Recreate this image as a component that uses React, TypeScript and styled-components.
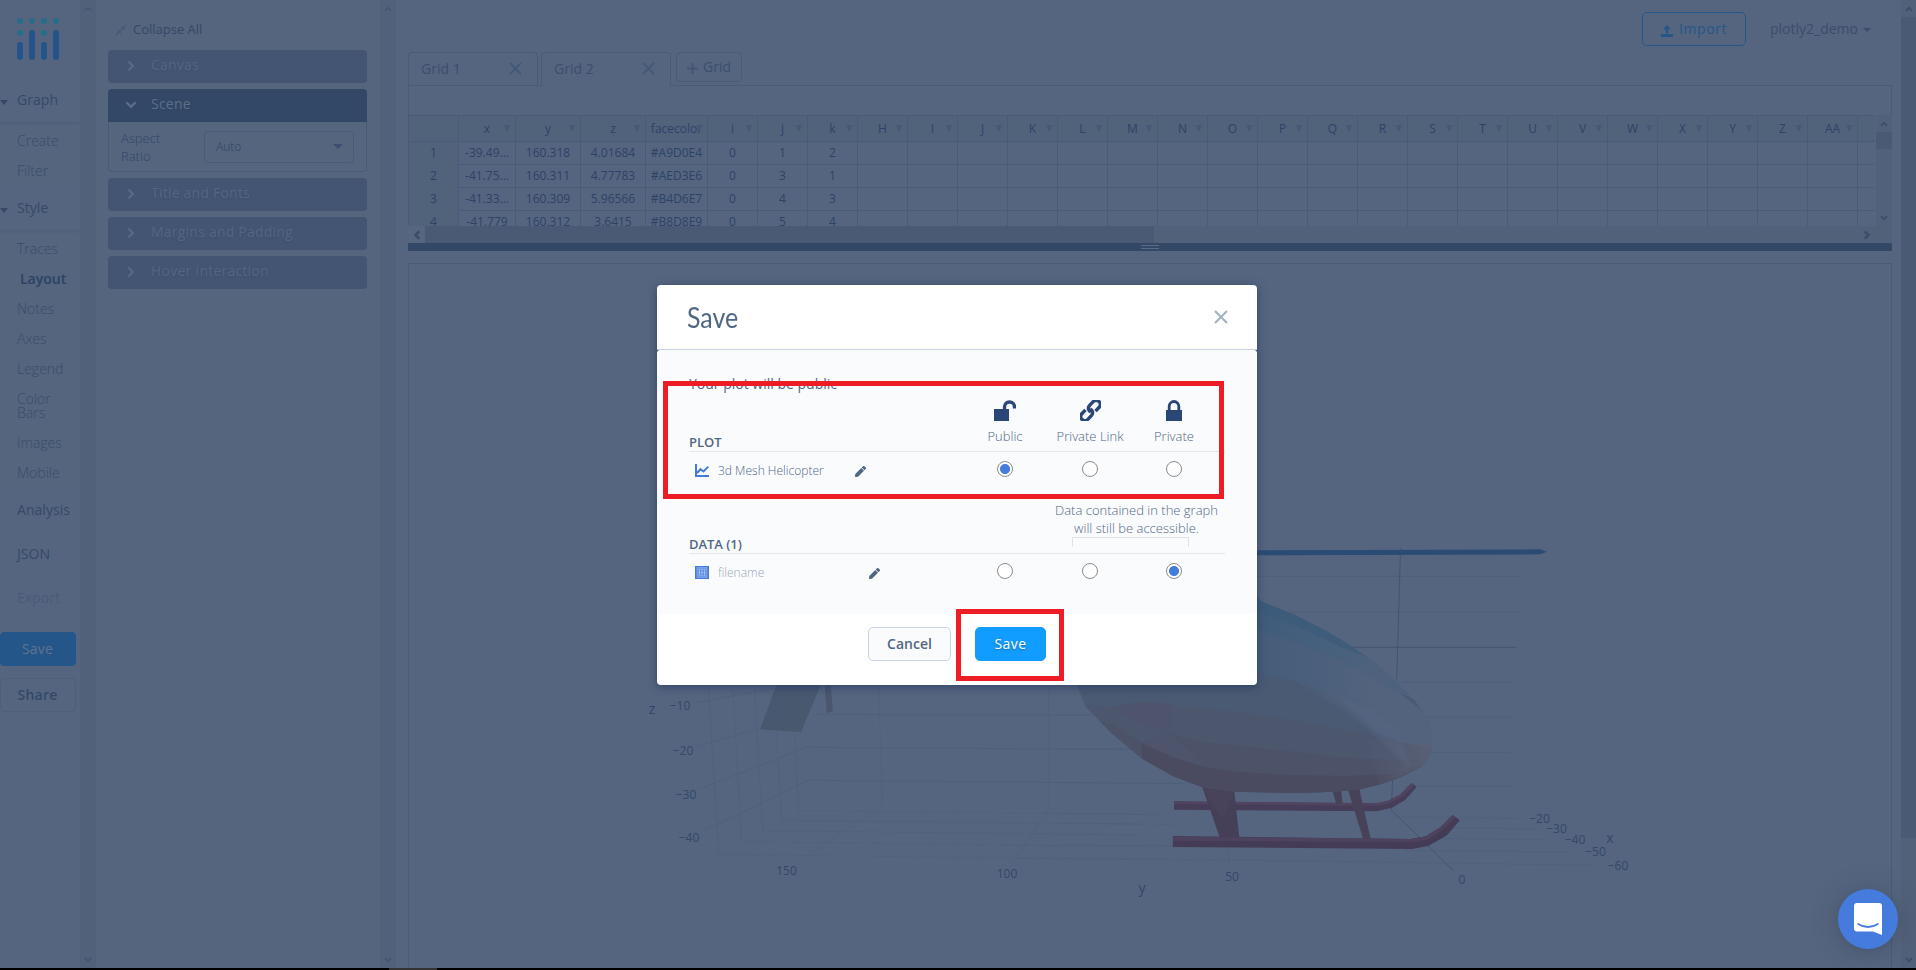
import React from "react";
import styled, { createGlobalStyle } from "styled-components";
import { FaPen, FaCompressAlt } from "react-icons/fa";

const sans = `"Open Sans", "Noto Sans", sans-serif`;
const c = {
  page: "#55657f",
  panel: "#54657d",
  track: "#52617a",
  thumb: "#4b5a74",
  line: "#4a5b78",
  text: "#3a4d6c",
  dark: "#324866",
  box: "#435573",
  blue: "#25568a",
  accent: "#447bdc",
};

const Global = createGlobalStyle`
  * { box-sizing: border-box; }
  html, body { margin: 0; padding: 0; }
  body { font-family: ${sans}; background: ${c.page}; overflow: hidden; }
  button { font-family: inherit; }
`;

const Page = styled.div`
  width: 1916px;
  height: 970px;
  display: flex;
  flex-direction: column;
  position: relative;
  overflow: hidden;
  color: ${c.text};
`;
const Workspace = styled.div`
  display: flex;
  height: 968px;
  background: ${c.page};
`;
const TaskEdge = styled.div`
  height: 2px;
  background: #000;
  padding-left: 389px;
`;
const TaskItem = styled.div`
  width: 48px;
  height: 2px;
  background: #333;
`;

const Nav = styled.nav`
  width: 80px;
  flex: none;
`;
const LogoWrap = styled.div`
  height: 78px;
  padding: 18px 0 0 17px;
`;
const NavHeader = styled.div<{ $faded?: boolean }>`
  height: 44px;
  display: flex;
  align-items: center;
  font-size: 14px;
  padding: 0 0 2px 17px;
  letter-spacing: 0.05px;
  position: relative;
  color: ${(p) => (p.$faded ? "#495b79" : "#344968")};
`;
const NavCaret = styled.span`
  position: absolute;
  left: 0;
  top: 22px;
  border: 4.5px solid transparent;
  border-top: 5px solid #344968;
  border-bottom: 0;
`;
const NavGroup = styled.div`
  width: 79px;
  padding-top: 4px;
  background: linear-gradient(#4e5f79 0, #54657d 4px);
`;
const NavItem = styled.div<{ $active?: boolean }>`
  padding: 8px 12px 8px ${(p) => (p.$active ? 20 : 17)}px;
  font-size: 14px;
  line-height: 14px;
  font-weight: ${(p) => (p.$active ? 600 : 300)};
  color: ${(p) => (p.$active ? "#2c4166" : "#384c6b")};
`;
const NavButton = styled.button<{ $primary?: boolean }>`
  display: block;
  width: 76px;
  height: 34px;
  margin-top: 12px;
  padding: 0 1px 2px 0;
  border-radius: 4px;
  border: 1px solid ${(p) => (p.$primary ? c.blue : "#4d5f7b")};
  background: ${(p) => (p.$primary ? c.blue : "transparent")};
  color: ${(p) => (p.$primary ? "#5f7390" : "#344968")};
  font-size: 14px;
  font-weight: ${(p) => (p.$primary ? 500 : 600)};
  letter-spacing: 0.2px;
`;

const ScrollTrack = styled.div<{ $w?: number }>`
  width: ${(p) => p.$w ?? 16}px;
  flex: none;
  background: ${c.track};
  display: flex;
  flex-direction: column;
  align-items: center;
  justify-content: space-between;
`;
const ScrollEnd = styled.div`
  height: 17px;
  width: 100%;
  display: flex;
  align-items: center;
  justify-content: center;
`;
const ScrollThumb = styled.div<{ $h: number }>`
  width: 100%;
  height: ${(p) => p.$h}px;
  background: ${c.thumb};
`;
const Spacer = styled.div`
  flex: 1;
`;

const Panel = styled.section`
  width: 284px;
  flex: none;
  background: ${c.panel};
  padding: 0 13px 0 12px;
`;
const CollapseAll = styled.div`
  height: 50px;
  padding: 8px 0 0 7px;
  display: flex;
  align-items: center;
  gap: 6px;
  font-size: 13px;
  color: #344868;
  svg { color: #475a76; position: relative; top: 1px; }
`;
const Fold = styled.div`
  margin-bottom: 6px;
`;
const FoldHead = styled.div<{ $open?: boolean }>`
  height: 33px;
  border-radius: ${(p) => (p.$open ? "4px 4px 0 0" : "4px")};
  background: ${(p) => (p.$open ? c.dark : c.box)};
  color: ${(p) => (p.$open ? "#5e6f8a" : "#546582")};
  display: flex;
  align-items: center;
  padding: 0 0 5px 17px;
  font-size: 14px;
  letter-spacing: 0.22px;
  text-shadow: 0 1px 2px rgba(42, 63, 95, 0.22);
  svg { position: relative; top: 2px; }
`;
const FoldIcon = styled.span`
  width: 26px;
  display: flex;
`;
const FoldBody = styled.div`
  height: 50px;
  border: 1px solid ${c.line};
  border-top: 0;
  border-radius: 0 0 4px 4px;
  display: flex;
  align-items: center;
  padding: 0 12px;
`;
const FieldLabel = styled.div`
  width: 83px;
  padding: 0 36px 0 0;
  font-size: 13px;
  line-height: 18px;
  font-weight: 300;
  color: #31456a;
`;
const Select = styled.div`
  width: 150px;
  height: 32px;
  border: 1px solid ${c.line};
  border-radius: 4px;
  display: flex;
  align-items: center;
  justify-content: space-between;
  padding: 0 10px 0 11px;
  font-size: 12px;
  font-weight: 300;
  color: #2f4468;
`;
const Caret = styled.span<{ $s: number; $c?: string }>`
  width: 0;
  height: 0;
  border: ${(p) => p.$s}px solid transparent;
  border-top-color: ${(p) => p.$c ?? c.text};
  border-bottom: 0;
`;

const Main = styled.main`
  width: 1505px;
  flex: none;
  padding: 0 9px 0 12px;
  display: flex;
  flex-direction: column;
`;
const TopBar = styled.header`
  height: 52px;
  padding: 12px 21px 0 0;
  display: flex;
  justify-content: flex-end;
`;
const ImportButton = styled.button`
  width: 104px;
  height: 34px;
  border: 1px solid ${c.blue};
  border-radius: 5px;
  background: transparent;
  color: ${c.blue};
  font-size: 14px;
  letter-spacing: 0.6px;
  padding: 0 0 1px;
  display: flex;
  align-items: center;
  justify-content: center;
  gap: 6px;
  svg { position: relative; top: 2px; }
`;
const User = styled.div`
  height: 34px;
  margin-left: 24px;
  display: flex;
  align-items: center;
  font-size: 14px;
  gap: 5px;
  padding-bottom: 2px;
  span:last-child { position: relative; top: 2px; }
`;

const Tabs = styled.div`
  height: 33px;
  display: flex;
  gap: 3px;
`;
const Tab = styled.div<{ $active?: boolean }>`
  width: 130px;
  height: ${(p) => (p.$active ? 34 : 33)}px;
  border: 1px solid ${c.line};
  border-bottom: 0;
  border-radius: 4px 4px 0 0;
  background: ${c.page};
  position: relative;
  display: flex;
  align-items: center;
  justify-content: space-between;
  padding: 0 15px ${(p) => (p.$active ? 2 : 1)}px 12px;
  font-size: 14px;
  color: #3a4e6d;
`;
const AddGrid = styled.div`
  width: 66px;
  height: 30px;
  margin-left: 2px;
  border: 1px solid ${c.line};
  border-radius: 4px;
  display: flex;
  align-items: center;
  padding: 0 0 1px 10px;
  gap: 5px;
  font-size: 14px;
  color: #3a4e6d;
  svg { position: relative; top: 2px; }
`;
const GridPanel = styled.div`
  border: 1px solid ${c.line};
  border-bottom: 0;
  height: 31px;
`;
const GridBody = styled.div`
  display: flex;
  height: 111px;
  margin-top: -1px;
`;
const Sheet = styled.div`
  width: 1467px;
  height: 111px;
  overflow: hidden;
  border-top: 1px solid ${c.line};
  border-left: 1px solid ${c.line};
`;
const Row = styled.div<{ $head?: boolean }>`
  display: flex;
  width: 1500px;
  height: ${(p) => (p.$head ? 26 : 23)}px;
  background: ${(p) => (p.$head ? "#51627b" : "transparent")};
`;
const Cell = styled.div<{ $w: number; $index?: boolean }>`
  width: ${(p) => p.$w}px;
  flex: none;
  border-right: 1px solid ${c.line};
  border-bottom: 1px solid ${(p) => (p.$index ? "#51627b" : c.line)};
  background: ${(p) => (p.$index ? "#51627b" : "transparent")};
  color: #2d4267;
  font-size: 12px;
  line-height: 16px;
  display: flex;
  align-items: center;
  justify-content: center;
  position: relative;
`;
const SortMark = styled.span`
  position: absolute;
  right: 5px;
  top: 9px;
  border: 3.5px solid transparent;
  border-top: 7px solid #455875;
  border-bottom: 0;
`;
const HScroll = styled.div`
  height: 17px;
  display: flex;
  background: ${c.track};
`;
const HEnd = styled.div<{ $lit?: boolean }>`
  width: 17px;
  background: ${(p) => (p.$lit ? "#56667f" : "transparent")};
  display: flex;
  align-items: center;
  justify-content: center;
`;
const HThumb = styled.div`
  width: 729px;
  background: ${c.thumb};
`;
const Divider = styled.div`
  height: 8px;
  background: ${c.dark};
  display: flex;
  flex-direction: column;
  align-items: center;
  padding: 2px 0 0 0;
  gap: 2px;
`;
const Grip = styled.div`
  width: 18px;
  height: 1px;
  background: #5a6b86;
`;
const PlotPanel = styled.div`
  flex: 1;
  margin-top: 12px;
  border: 1px solid ${c.line};
  border-bottom: 0;
  min-height: 0;
  svg { display: block; }
`;
const PlotLabel = styled.text<{ $big?: boolean }>`
  font-family: ${sans};
  font-size: ${(p) => (p.$big ? 14 : 12)}px;
  fill: #33476a;
  text-anchor: middle;
  dominant-baseline: central;
`;

const Layer = styled.div`
  position: absolute;
  inset: 0;
  display: flex;
  justify-content: center;
  padding: 285px 2px 0 0;
`;
const Modal = styled.div`
  width: 600px;
  height: 400px;
  border-radius: 4px;
  position: relative;
  display: flex;
  flex-direction: column;
  color: #506784;
  box-shadow: 0 2px 10px rgba(30, 52, 90, 0.65);
`;
const ModalHead = styled.div`
  height: 65px;
  background: #fff;
  border-radius: 4px 4px 0 0;
  border-bottom: 1px solid #c8d4e3;
  padding: 0 29px 0 30px;
  display: flex;
  align-items: center;
  justify-content: space-between;
`;
const Title = styled.h2`
  margin: 0;
  padding-bottom: 2px;
  font: 400 29px Lato, sans-serif;
  transform: scaleX(0.86);
  transform-origin: left;
  color: #506784;
`;
const ModalMain = styled.div`
  flex: 1;
  border-radius: 4px;
  background: #fff;
`;
const ModalBody = styled.div`
  height: 264px;
  border-radius: 4px;
  background: #fafbfd;
  padding: 24px 32px 0;
`;
const Notice = styled.div`
  height: 20px;
  line-height: 20px;
  font-size: 14px;
`;
const SectionHead = styled.div<{ $h: number }>`
  height: ${(p) => p.$h}px;
  border-bottom: 1px solid #e3e6ea;
  display: grid;
  grid-template-columns: 274px 84px 86px 82px;
  align-items: end;
`;
const SectionName = styled.div`
  font-size: 13px;
  font-weight: 600;
  line-height: 16px;
  padding-bottom: 1px;
  letter-spacing: -0.05px;
`;
const Access = styled.div`
  display: flex;
  flex-direction: column;
  align-items: center;
  font-size: 13px;
  font-weight: 300;
  line-height: 18px;
  padding-bottom: 6px;
  gap: 6px;
  white-space: nowrap;
  svg { color: #2a4676; display: block; }
`;
const FileRow = styled.div`
  height: 36px;
  display: grid;
  grid-template-columns: 274px 84px 86px 82px;
  align-items: center;
  padding-bottom: 2px;
`;
const FileName = styled.div<{ $gap: number; $muted?: boolean }>`
  display: flex;
  align-items: center;
  padding: 3px 0 0 6px;
  font-size: 12px;
  font-weight: 300;
  color: ${(p) => (p.$muted ? "#98a6b8" : "#506784")};
  span { margin-left: 9px; width: ${(p) => p.$gap}px; white-space: nowrap; }
  > svg:last-child { color: #506784; position: relative; top: 1px; }
`;
const Radio = styled.div<{ $on?: boolean }>`
  width: 16px;
  height: 16px;
  justify-self: center;
  border: 1px solid #8c8c8c;
  border-radius: 50%;
  background: ${(p) => (p.$on ? `radial-gradient(circle, ${c.accent} 4.6px, #fff 5.4px)` : "#fff")};
`;
const DataNote = styled.div`
  height: 48px;
  margin: 13px 0 0 358px;
  width: 179px;
  text-align: center;
  font-size: 13px;
  font-weight: 300;
  line-height: 18px;
`;
const Bracket = styled.div`
  width: 117px;
  height: 10px;
  margin-left: 25px;
  border: 1px solid #dfe3e8;
  border-bottom: 0;
`;
const DataTitle = styled(SectionName)`
  margin-top: -12px;
  line-height: 15px;
  border-bottom: 1px solid #e3e6ea;
  height: 17px;
`;
const Footer = styled.div`
  display: flex;
  padding: 13px 0 0 211px;
  gap: 24px;
`;
const Button = styled.button<{ $primary?: boolean }>`
  width: ${(p) => (p.$primary ? 71 : 83)}px;
  height: 34px;
  padding: 0 0 2px;
  border-radius: 5px;
  border: 1px solid ${(p) => (p.$primary ? "#119dff" : "#c8d4e3")};
  background: ${(p) => (p.$primary ? "#119dff" : "#fafbfd")};
  color: ${(p) => (p.$primary ? "#fff" : "#506784")};
  font-size: 14px;
  font-weight: ${(p) => (p.$primary ? 500 : 600)};
  letter-spacing: ${(p) => (p.$primary ? 0.4 : 0)}px;
  text-shadow: ${(p) => (p.$primary ? "0 1px 2px rgba(42,63,95,.5)" : "none")};
`;
const Highlight = styled.div<{ $x: number; $y: number; $w: number; $h: number }>`
  position: absolute;
  left: ${(p) => p.$x}px;
  top: ${(p) => p.$y}px;
  width: ${(p) => p.$w}px;
  height: ${(p) => p.$h}px;
  border: 5px solid #ee1c24;
`;
const Chat = styled.div`
  position: absolute;
  right: 18px;
  bottom: 21px;
  width: 60px;
  height: 60px;
  border-radius: 50%;
  background: ${c.accent};
  box-shadow: 0 1px 6px rgba(0, 0, 0, 0.06), 0 2px 32px rgba(0, 0, 0, 0.16);
  display: flex;
  align-items: center;
  justify-content: center;
`;

type Dir = "up" | "down" | "left" | "right";
const turns: Record<Dir, number> = { up: 0, right: 90, down: 180, left: 270 };
const Chevron = ({ dir, size = 8, w = 1.8, color = "#3a4d6b" }: { dir: Dir; size?: number; w?: number; color?: string }) => (
  <svg width={size} height={size} viewBox="0 0 8 8" fill="none" stroke={color} strokeWidth={w}>
    <path d="M1 5.8 4 2.8 7 5.8" transform={`rotate(${turns[dir]} 4 4)`} />
  </svg>
);
const Cross = ({ size, w, color }: { size: number; w: number; color: string }) => (
  <svg width={size} height={size} viewBox="0 0 14 14" fill="none" stroke={color} strokeWidth={w}>
    <path d="M1 1 13 13M13 1 1 13" />
  </svg>
);
const Logo = () => (
  <svg width="42" height="42" viewBox="0 0 42 42">
    {[0, 12, 24, 36].map((x) => <circle key={x} cx={x + 3} cy="3" r="3" fill="#266d88" />)}
    {[0, 24].map((x) => <circle key={x} cx={x + 3} cy="15" r="3" fill="#266d88" />)}
    {[0, 24].map((x) => <rect key={x} x={x} y="24" width="6" height="18" rx="3" fill="#245489" />)}
    {[12, 36].map((x) => <rect key={x} x={x} y="12" width="6" height="30" rx="3" fill="#245489" />)}
  </svg>
);
const Unlocked = () => (
  <svg width="22" height="21" viewBox="0 0 22 21">
    <rect y="9" width="15" height="12" fill="currentColor" />
    <path d="M10.5 10V7a5 5 0 0 1 10 0v1.5" fill="none" stroke="currentColor" strokeWidth="3.4" />
  </svg>
);
const Locked = () => (
  <svg width="16" height="21" viewBox="0 0 16 21">
    <rect y="10" width="16" height="11" fill="currentColor" />
    <path d="M3.2 11V6.3a4.8 4.8 0 0 1 9.6 0V11" fill="none" stroke="currentColor" strokeWidth="2.8" />
  </svg>
);
const Chain = () => (
  <svg width="21" height="21" viewBox="0 0 21 21" fill="none" stroke="currentColor" strokeWidth="3.4">
    <g transform="rotate(-47 10.5 10.5)">
      <path d="M7.500 6.400H2.200a4 4 0 0 0 0 8.200H7.700a4 4 0 0 0 3.700-5.400" />
      <path d="M13.500 14.600H18.800a4 4 0 0 0 0-8.200H13.300a4 4 0 0 0-3.700 5.400" />
    </g>
  </svg>
);
const ChartIcon = () => (
  <svg width="14" height="13" viewBox="0 0 14 13" fill="none" stroke={c.accent} strokeWidth="2">
    <path d="M1 0V12H14" />
    <path d="M2 9 5.5 5.2 8.5 7.5 13.3 2.6" />
  </svg>
);
const GridIcon = () => (
  <svg width="14" height="13" viewBox="0 0 14 13">
    <rect width="14" height="13" fill={c.accent} />
    <rect x="2" y="1.5" width="10" height="10" fill="#6f9ae5" stroke="#86a9e8" strokeWidth=".8" />
    <path d="M4.5 3.5V9.5M7 3.5V9.5M9.5 3.5V9.5" stroke="#c6d6f5" strokeWidth="1" />
    <path d="M3 5H11M3 8H11" stroke={c.accent} strokeWidth=".7" />
  </svg>
);

const columns: [string, number][] = [["x", 57], ["y", 65], ["z", 65], ["facecolor", 62], ["i", 50], ["j", 50], ["k", 50],
  ..."H I J K L M N O P Q R S T U V W X Y Z AA".split(" ").map((n): [string, number] => [n, 50]), ["", 50]];
const rows = [
  ["-39.49...", "160.318", "4.01684", "#A9D0E4", "0", "1", "2"],
  ["-41.75...", "160.311", "4.77783", "#AED3E6", "0", "3", "1"],
  ["-41.33...", "160.309", "5.96566", "#B4D6E7", "0", "4", "3"],
  ["-41.779", "160.312", "3.6415", "#B8D8E9", "0", "5", "4"],
];

const axisLabels: [string, number, number][] = [
  ["−10", 680, 705], ["−20", 683, 750], ["−30", 686, 794], ["−40", 689, 837.5],
  ["150", 786.5, 870], ["100", 1007, 873], ["50", 1232, 876], ["0", 1462, 879],
  ["−20", 1539.5, 818], ["−30", 1556.5, 828], ["−40", 1575, 839.5], ["−50", 1595.5, 851.5], ["−60", 1618, 865.5],
];

const hull = "M500 228 517 230 527 245 615 285 700 335 765 380 820 425 880 485 930 545 962 595 971 630 973 660 970 690 958 722 940 742 890 772 840 792 785 808 715 815 620 819 455 815 372 802 295 768 215 716 135 640 65 557 44 495 30 440Z";

const Helicopter = () => (
  <svg width="1482" height="704" viewBox="409 264 1482 704">
    <defs>
      <clipPath id="hull"><path d={hull} /></clipPath>
      <linearGradient id="canopy" gradientUnits="userSpaceOnUse" x1="531" x2="900" y1="0" y2="0">
        <stop offset="0" stopColor="#455d7a" />
        <stop offset=".5" stopColor="#4b607c" />
        <stop offset="1" stopColor="#54637d" />
      </linearGradient>
      <linearGradient id="roof" gradientUnits="userSpaceOnUse" x1="560" x2="900" y1="0" y2="250">
        <stop offset="0" stopColor="#3e5b7a" />
        <stop offset=".5" stopColor="#45607d" />
        <stop offset="1" stopColor="#4f627d" />
      </linearGradient>
      <linearGradient id="belly" gradientUnits="userSpaceOnUse" x1="850" x2="1040" y1="0" y2="0">
        <stop offset="0" stopColor="#575e75" stopOpacity="0" />
        <stop offset="1" stopColor="#5b6177" stopOpacity=".8" />
      </linearGradient>
      <filter id="soft"><feGaussianBlur stdDeviation="7" /></filter>
    </defs>
    <g transform="translate(640 660) scale(.33333)" fill="none" stroke="#4b5c76" strokeWidth="2.2">
      <path d="M170 128 400 85M175 258 365 203M180 386 500 262 1100 266 1560 268M192 512 505 361 1100 366 1620 371M530 163 1350 166" strokeOpacity=".8" />
      <g strokeOpacity=".5">
        <path d="M205 75 236 583 1500 599M278 75 305 545 1500 560M343 75 368 512 1500 525M408 200 425 481 1500 493M462 200 476 452 1500 463" />
        <path d="M716 75 728 436 472 608M1225 75 1228 443 1115 617" />
      </g>
    </g>
    <g transform="translate(640 660) scale(.33333)">
      <path d="M415 60 548 60 483 216 360 208Z" fill="#47586f" />
      <path d="M553 60 572 75 579 155 560 158Z" fill="#4a566e" />
    </g>
    <g transform="translate(1060 520) scale(.38265 .33333)">
      <g fill="none" stroke="#4b5c76" strokeWidth="2.2">
        <path d="M500 169H1205M600 277H1200M880 487H1188M960 592H1180M970 697H1178M900 799H1175" strokeOpacity=".8" />
        <path d="M0 585H90M0 688H200M0 787 372 791M870 890 1200 895M0 880 260 884M0 909 300 913M1010 923 1250 927M980 955 1270 960M0 974 300 978M900 991 1330 996M0 1015 440 1020 900 1027 1390 1036M436 985 446 1045" strokeOpacity=".5" />
        <path d="M890 85 880 480M765 382H1193M869 780 866 870 1028 1052" stroke="#3c4f6b" />
      </g>
      <path d="M500 91 1255 88 1272 95 1255 103 500 106Z" fill="#2a4b73" />
      <path d="M298 845 826 850 858 842 890 823 919 789 932 801 902 840 868 863 828 874 298 869Z" fill="#463e59" />
      <path d="M298 843 826 850 858 842 890 823 919 789 925 795 896 829 862 850 826 857 298 852Z" fill="#504460" />
      <path d="M712 812H735L739 851 722 853ZM750 800H781L812 957 793 959Z" fill="#484259" />
      <path d="M370 795 455 808 469 958 419 958Z" fill="#453f58" />
      <path d="M372 803 453 815 425 900Z" fill="#4b455c" opacity=".6" />
      <path d="M295 948 916 957 956 949 994 922 1026 885 1045 901 1010 947 962 978 920 987 295 981Z" fill="#443c57" />
      <path d="M295 950 916 957 956 949 994 922 1026 885 1034 892 1000 929 960 959 918 967 295 962Z" fill="#4e435f" />
      <g clipPath="url(#hull)">
        <path d={hull} fill="#4a5a73" />
        <g transform="translate(52.3 210) scale(.8711 1)">
          <path d="M0 345 95 350 185 335 370 357 465 365 660 392 795 420 960 450 1080 465V640H0Z" fill="#4c576e" />
          <path d="M0 390 95 400 185 458 275 432 370 457 465 465 560 477 660 487 765 500 870 507 1060 512V640H0Z" fill="#4c5268" />
          <path d="M95 355 185 398 275 435 275 342 185 335ZM185 458 275 505 370 530 275 432Z" fill="#4d546b" />
          <path d="M185 460 275 500 370 530 465 545 620 555 800 558 930 552 1040 520V640H185Z" fill="#4a4b60" />
          <path d="M520 115 560 128 660 162 755 200 870 258 960 310 1060 390 1070 480 960 455 890 425 840 375 790 335 720 300 640 272 531 250Z" fill="url(#canopy)" />
          <path d="M650 280 760 318 860 350 960 420 990 530 930 480 860 410 780 350Z" fill="#566580" opacity=".6" filter="url(#soft)" />
          <path d="M500 0 560 30 680 90 830 175 950 270 1010 330 960 310 870 258 755 200 660 162 560 128 520 115Z" fill="url(#roof)" />
          <path d="M531 25 640 70 750 125 860 200 790 175 660 112 560 75 531 70Z" fill="#3b5a79" opacity=".6" />
          <path d="M850 450 960 455 1060 465 1060 500 1000 560 900 590Z" fill="url(#belly)" />
          <path d="M950 470 990 530 940 560" stroke="#646a82" strokeWidth="16" fill="none" opacity=".25" filter="url(#soft)" />
          <g fill="none" stroke="#667690" strokeOpacity=".1" strokeWidth="1.5">
            <path d="M95 345V430M185 320V505M275 290V555M370 290 367 590M465 290V600M565 375 550 600M660 392 655 600M560 75V128L565 250M642 75 660 162 663 272M750 150 775 320M790 175 800 330M830 205 840 360M870 235 880 400M910 270 905 420M950 320 940 440M985 340 965 455M760 405V500M790 415V555M825 420V555M860 425V550M900 430V550" />
            <path d="M275 432 370 530M370 457 465 545M465 465 550 590M465 365 560 477M560 380 660 487M570 130 660 230" />
          </g>
        </g>
      </g>
    </g>
    {axisLabels.map(([t, x, y]) => <PlotLabel key={`${t}${x}`} x={x} y={y}>{t}</PlotLabel>)}
    <PlotLabel $big x={652} y={708}>z</PlotLabel>
    <PlotLabel $big x={1142} y={887}>y</PlotLabel>
    <PlotLabel $big x={1610} y={837}>x</PlotLabel>
  </svg>
);

const SideScroll = () => (
  <ScrollTrack>
    <ScrollEnd><Chevron dir="up" color="#435573" w={1.4} /></ScrollEnd>
    <ScrollEnd><Chevron dir="down" color="#435573" w={1.8} /></ScrollEnd>
  </ScrollTrack>
);

const Folded = ({ title }: { title: string }) => (
  <Fold>
    <FoldHead>
      <FoldIcon><Chevron dir="right" size={12} w={1.5} color="#586985" /></FoldIcon>
      {title}
    </FoldHead>
  </Fold>
);

export default function App() {
  return (
    <>
      <Global />
      <Page>
        <Workspace>
          <Nav>
            <LogoWrap><Logo /></LogoWrap>
            <NavHeader><NavCaret />Graph</NavHeader>
            <NavGroup>
              <NavItem>Create</NavItem>
              <NavItem>Filter</NavItem>
            </NavGroup>
            <NavHeader><NavCaret />Style</NavHeader>
            <NavGroup>
              {["Traces", "Layout", "Notes", "Axes", "Legend", "Color Bars", "Images", "Mobile"].map((n) => (
                <NavItem key={n} $active={n === "Layout"}>{n}</NavItem>
              ))}
            </NavGroup>
            <NavHeader>Analysis</NavHeader>
            <NavHeader>JSON</NavHeader>
            <NavHeader $faded>Export</NavHeader>
            <NavButton $primary>Save</NavButton>
            <NavButton>Share</NavButton>
          </Nav>
          <SideScroll />
          <Panel>
            <CollapseAll><FaCompressAlt size={12} />Collapse All</CollapseAll>
            <Folded title="Canvas" />
            <Fold>
              <FoldHead $open>
                <FoldIcon><Chevron dir="down" size={12} w={1.5} color="#5c6d88" /></FoldIcon>
                Scene
              </FoldHead>
              <FoldBody>
                <FieldLabel>Aspect Ratio</FieldLabel>
                <Select>Auto<Caret $s={5} $c="#3c4f6e" /></Select>
              </FoldBody>
            </Fold>
            <Folded title="Title and Fonts" />
            <Folded title="Margins and Padding" />
            <Folded title="Hover Interaction" />
          </Panel>
          <SideScroll />
          <Main>
            <TopBar>
              <ImportButton>
                <svg width="12" height="12" viewBox="0 0 12 12" fill="currentColor">
                  <path d="M6 0 10 4.2H7.1V8.5H4.9V4.2H2ZM0 9H12V12H0Z" />
                </svg>
                Import
              </ImportButton>
              <User><span>plotly2_demo</span><Caret $s={4} /></User>
            </TopBar>
            <Tabs>
              <Tab>Grid 1<Cross size={13} w={1.7} color="#425675" /></Tab>
              <Tab $active>Grid 2<Cross size={13} w={1.7} color="#425675" /></Tab>
              <AddGrid>
                <svg width="11" height="11" viewBox="0 0 11 11" stroke="#435674" strokeWidth="2"><path d="M5.5 0V11M0 5.5H11" /></svg>
                Grid
              </AddGrid>
            </Tabs>
            <GridPanel />
            <GridBody>
              <Sheet>
                <Row $head>
                  <Cell $w={50} />
                  {columns.map(([n, w], i) => <Cell key={i} $w={w}>{n}<SortMark /></Cell>)}
                </Row>
                {rows.map((r, i) => (
                  <Row key={i}>
                    <Cell $w={50} $index>{i + 1}</Cell>
                    {columns.map(([, w], j) => <Cell key={j} $w={w}>{r[j]}</Cell>)}
                  </Row>
                ))}
              </Sheet>
              <Spacer />
              <ScrollTrack>
                <ScrollEnd><Chevron dir="up" /></ScrollEnd>
                <ScrollThumb $h={17} />
                <Spacer />
                <ScrollEnd><Chevron dir="down" /></ScrollEnd>
              </ScrollTrack>
            </GridBody>
            <HScroll>
              <HEnd $lit><Chevron dir="left" size={10} w={2} /></HEnd>
              <HThumb />
              <Spacer />
              <HEnd><Chevron dir="right" size={10} w={2} /></HEnd>
              <HEnd />
            </HScroll>
            <Divider><Grip /><Grip /></Divider>
            <PlotPanel><Helicopter /></PlotPanel>
          </Main>
          <ScrollTrack $w={15}>
            <ScrollEnd><Chevron dir="up" /></ScrollEnd>
            <ScrollThumb $h={821} />
            <Spacer />
            <ScrollEnd><Chevron dir="down" /></ScrollEnd>
          </ScrollTrack>
        </Workspace>
        <TaskEdge><TaskItem /></TaskEdge>

        <Layer>
          <Modal>
            <ModalHead>
              <Title>Save</Title>
              <Cross size={14} w={2.1} color="#a2b1c6" />
            </ModalHead>
            <ModalMain>
              <ModalBody>
                <Notice>Your plot will be public</Notice>
                <SectionHead $h={58}>
                  <SectionName>PLOT</SectionName>
                  <Access><Unlocked />Public</Access>
                  <Access><Chain />Private Link</Access>
                  <Access><Locked />Private</Access>
                </SectionHead>
                <FileRow>
                  <FileName $gap={137}><ChartIcon /><span>3d Mesh Helicopter</span><FaPen size={11} /></FileName>
                  <Radio $on /><Radio /><Radio />
                </FileRow>
                <DataNote>Data contained in the graph<br />will still be accessible.<Bracket /></DataNote>
                <DataTitle>DATA (1)</DataTitle>
                <FileRow>
                  <FileName $gap={151} $muted><GridIcon /><span>filename</span><FaPen size={11} /></FileName>
                  <Radio /><Radio /><Radio $on />
                </FileRow>
              </ModalBody>
              <Footer>
                <Button>Cancel</Button>
                <Button $primary>Save</Button>
              </Footer>
            </ModalMain>
            <Highlight $x={6} $y={96} $w={561} $h={118} />
            <Highlight $x={299} $y={324} $w={108} $h={72} />
          </Modal>
        </Layer>
        <Chat>
          <svg width="28" height="32" viewBox="0 0 28 32">
            <path d="M3 0H25a3 3 0 0 1 3 3V32L19 28.5H3a3 3 0 0 1-3-3V3a3 3 0 0 1 3-3Z" fill="#fff" />
            <path d="M4.2 21c6 4 13.6 4 19.6 0" fill="none" stroke={c.accent} strokeWidth="1.8" strokeLinecap="round" />
          </svg>
        </Chat>
      </Page>
    </>
  );
}
